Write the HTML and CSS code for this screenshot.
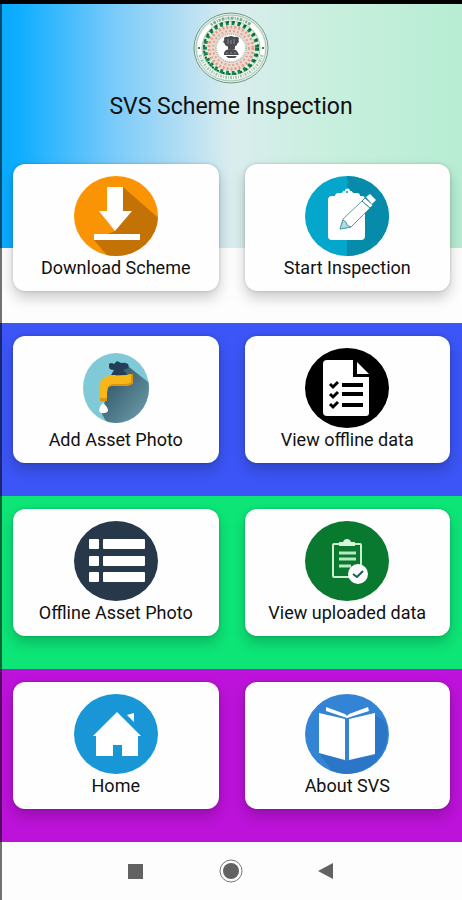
FILE: index.html
```html
<!DOCTYPE html>
<html lang="en">
<head>
    <meta charset="UTF-8">
    <meta name="viewport" content="width=device-width, initial-scale=1.0">
    <title>SVS Scheme Inspection</title>
    <link rel="stylesheet" href="styles.css">
</head>
<body>
    <div class="screen">
        <header class="header">
            <!-- state seal -->
            <svg class="seal" viewBox="0 0 76 72" aria-hidden="true">
                <ellipse cx="38" cy="36" rx="37" ry="35" fill="#e3efe6" stroke="#6f9a88" stroke-width="1"/>
                <ellipse cx="38" cy="36" rx="35" ry="33" fill="none" stroke="#a9c5b5" stroke-width="1"/>
                <!-- white sides of the outer ring -->
                <ellipse cx="38" cy="36" rx="31" ry="29" fill="none" stroke="#fff" stroke-width="5"/>
                <!-- lettering marks, top and bottom -->
                <path d="M18 13A31 29 0 0 1 58 13" fill="none" stroke="#7fae93" stroke-width="3" stroke-dasharray="2 1 3 1 1 1"/>
                <path d="M7 43A32 30 0 0 0 69 43" fill="none" stroke="#a3c6b2" stroke-width="3" stroke-dasharray="2 1 1 1"/>
                <circle cx="6" cy="36" r="1" fill="#333"/>
                <circle cx="70" cy="36" r="1" fill="#333"/>
                <ellipse cx="38" cy="36" rx="29" ry="27" fill="#dff0e2" stroke="#9ccbad" stroke-width="1"/>
                <ellipse cx="38" cy="36" rx="26" ry="25" fill="none" stroke="#18834a" stroke-width="4" stroke-dasharray="3 3"/>
                <ellipse cx="38" cy="36" rx="27" ry="26" fill="none" stroke="#105c35" stroke-width="2" stroke-dasharray="2 4"/>
                <ellipse cx="38" cy="36" rx="19" ry="18" fill="none" stroke="#eedbd0" stroke-width="9"/>
                <ellipse cx="38" cy="36" rx="22" ry="21" fill="none" stroke="#e79c8b" stroke-width="3" stroke-dasharray="2 2"/>
                <ellipse cx="38" cy="36" rx="18" ry="17" fill="none" stroke="#d9a797" stroke-width="2" stroke-dasharray="2 2"/>
                <ellipse cx="38" cy="36" rx="15" ry="14" fill="#fff" stroke="#b3b8ae" stroke-width="2" stroke-dasharray="1 1"/>
                <!-- lion capital -->
                <g fill="#4b4b4f">
                    <path d="M31 26q2-2 4-1q3-2 6 0q3-1 5 1q-1 2 0 4q-2 1-2 3q-2 2-6 2t-6-2q0-2-2-3q2-2 1-4z"/>
                    <path d="M35 34h7v3h-7zM31 41q1-4 7-4t7 4l1 2H31zM33 44h11l-2 2h-7z"/>
                </g>
                <path d="M35 27v5M38 28v4M41 27v5M33 41h2M37 41h2M41 41h2" stroke="#8f8f92" stroke-width="1"/>
            </svg>
            <h1 class="title">SVS Scheme Inspection</h1>
        </header>

        <main>
            <div class="row">
                <button class="card" type="button">
                    <svg class="icon" viewBox="0 0 84 80" aria-hidden="true">
                        <defs>
                            <clipPath id="disc"><ellipse cx="42" cy="40" rx="42" ry="40"/></clipPath>
                        </defs>
                        <ellipse cx="42" cy="40" rx="42" ry="40" fill="#fb9404"/>
                        <path clip-path="url(#disc)" fill="#c37206" d="M49 11L90 47V90H42L20 64L41 55L49 35z"/>
                        <path fill="#fff" d="M33 11h16v24h9L41 55L25 35h8zM20 58h46v6H20z"/>
                    </svg>
                    <span class="label">Download Scheme</span>
                </button>
                <button class="card" type="button">
                    <svg class="icon" viewBox="0 0 84 80" aria-hidden="true">
                        <ellipse cx="42" cy="40" rx="42" ry="40" fill="#05a6cb"/>
                        <path fill="#078bab" d="M42 0A42 40 0 0 1 42 80z"/>
                        <path fill="#fff" d="M27 20h3q0-3 4-3h2q2 0 2-2h2a2 2 0 0 1 5 0h2q0 2 3 2h2q3 0 3 3h2q3 0 3 3v37q0 4-4 4H27q-4 0-4-4V24q0-4 4-4z"/>
                        <circle cx="42" cy="16" r="1" fill="#078bab"/>
                        <path fill="#fff" stroke="#5c9eab" stroke-width="1" stroke-linejoin="round" d="M35 53L38 43L57 25L65 32L46 51z"/>
                        <path fill="#a9dce4" stroke="#5c9eab" stroke-width="1" d="M35 53L38 44L41 46L42 49L46 51z"/>
                        <path fill="#fff" stroke="#368d9f" stroke-width="1" d="M57 25L60 22L68 29L65 32z"/>
                        <path fill="#fff" d="M61 21L65 18L71 24L67 28z"/>
                    </svg>
                    <span class="label">Start Inspection</span>
                </button>
            </div>

            <div class="row row-blue">
                <button class="card" type="button">
                    <svg class="icon" viewBox="0 0 84 80" aria-hidden="true">
                        <defs>
                            <clipPath id="tapDisc"><ellipse cx="42" cy="40" rx="33" ry="35"/></clipPath>
                            <linearGradient id="tapShade" x1="0" y1="0" x2="1" y2="1">
                                <stop offset="0.200" stop-color="#365d6d"/>
                                <stop offset="0.800" stop-color="#6d9ca9"/>
                            </linearGradient>
                        </defs>
                        <ellipse cx="42" cy="40" rx="33" ry="35" fill="#80cad7"/>
                        <path clip-path="url(#tapDisc)" fill="url(#tapShade)" d="M50 15L84 42V84H38L28 66L34 40z"/>
                        <path fill="#243e5a" d="M35 16q2-2 5 0l3-3l4 2q4-1 7 1q2 4-2 5l-3 1l5 5H37l3-5q-5 0-5-3z"/>
                        <path fill="#f8b719" d="M26 53V37q0-8 9-9l17-1q3-1 6-1v10q-3 2-7 2H38q-5 0-5 4v11z"/>
                        <path fill="#dc940d" d="M26 53v-3h7v3zM57 26h2v10h-2zM33 42q0-5 6-6h12q4 0 7-2v2q-3 2-7 2H38q-5 0-5 4z"/>
                        <path fill="#fff" d="M29 55q5 4 5 8a5 4 0 0 1-9 0q0-4 4-8z"/>
                    </svg>
                    <span class="label">Add Asset Photo</span>
                </button>
                <button class="card" type="button">
                    <svg class="icon" viewBox="0 0 84 80" aria-hidden="true">
                        <ellipse cx="42" cy="40" rx="42" ry="40" fill="#000"/>
                        <path fill="#fff" d="M22 12h26v17h16v36q0 3-3 3H22q-4 0-4-4V16q0-4 4-4z"/>
                        <path fill="#fff" d="M52 14L64 26H52z"/>
                        <path stroke="#000" stroke-width="4" d="M37 37h21M37 46h21M37 57h21"/>
                        <path fill="none" stroke="#000" stroke-width="3" d="M25 36l3 3l5-5M25 46l3 3l5-5M25 56l3 3l5-5"/>
                    </svg>
                    <span class="label">View offline data</span>
                </button>
            </div>

            <div class="row row-green">
                <button class="card" type="button">
                    <svg class="icon" viewBox="0 0 84 80" aria-hidden="true">
                        <ellipse cx="42" cy="40" rx="42" ry="40" fill="#26384a"/>
                        <g fill="#fff">
                            <rect x="15" y="18" width="10" height="10" rx="1"/>
                            <rect x="29" y="18" width="42" height="10" rx="1"/>
                            <rect x="15" y="35" width="10" height="10" rx="1"/>
                            <rect x="29" y="35" width="42" height="10" rx="1"/>
                            <rect x="15" y="51" width="10" height="10" rx="1"/>
                            <rect x="29" y="51" width="42" height="10" rx="1"/>
                        </g>
                    </svg>
                    <span class="label">Offline Asset Photo</span>
                </button>
                <button class="card" type="button">
                    <svg class="icon" viewBox="0 0 84 80" aria-hidden="true">
                        <ellipse cx="42" cy="40" rx="42" ry="40" fill="#08792f"/>
                        <rect x="28" y="23" width="28" height="33" rx="1" fill="none" stroke="#c9f0cf" stroke-width="2"/>
                        <path fill="#d9f5dc" d="M34 21h4q1-3 4-3t4 3h4v4H34z"/>
                        <path stroke="#b9e8c1" stroke-width="3" d="M34 32h17M34 38h17M34 45h12"/>
                        <circle cx="53" cy="53" r="10" fill="#fff"/>
                        <path fill="none" stroke="#1e5b57" stroke-width="2" d="M48 53l4 3l6-6"/>
                    </svg>
                    <span class="label">View uploaded data</span>
                </button>
            </div>

            <div class="row row-purple">
                <button class="card" type="button">
                    <svg class="icon" viewBox="0 0 84 80" aria-hidden="true">
                        <ellipse cx="42" cy="40" rx="42" ry="40" fill="#1996d5"/>
                        <path fill="#fff" d="M43 18L67 42H64V62H48V51H39V62H22V42H19zM53 21L60 19V28z"/>
                    </svg>
                    <span class="label">Home</span>
                </button>
                <button class="card" type="button">
                    <svg class="icon" viewBox="0 0 84 80" aria-hidden="true">
                        <ellipse cx="42" cy="40" rx="42" ry="40" fill="#3484d6"/>
                        <path fill="#2c76c8" d="M14 59L41 67L70 61V21L80 27A42 40 0 0 1 42 80q-8 0-16-4z"/>
                        <path fill="#fff" d="M14 19L40 25V66L14 59zM44 25L70 19V60L44 66zM21 13L40 20L42 22L44 20L63 13L64 17L42 24L21 17z"/>
                    </svg>
                    <span class="label">About SVS</span>
                </button>
            </div>
        </main>

        <!-- system buttons -->
        <nav class="navbar">
            <button class="nav-button" type="button" aria-label="Recent apps">
                <svg class="nav-icon" viewBox="0 0 24 24"><rect x="5" y="5" width="15" height="15" fill="#626262"/></svg>
            </button>
            <button class="nav-button" type="button" aria-label="Home screen">
                <svg class="nav-icon" viewBox="0 0 24 24">
                    <circle cx="12" cy="12" r="11" fill="none" stroke="#777" stroke-width="1"/>
                    <circle cx="12" cy="12" r="8" fill="#626262"/>
                </svg>
            </button>
            <button class="nav-button" type="button" aria-label="Back">
                <svg class="nav-icon" viewBox="0 0 24 24"><path d="M18 4V20L3 12z" fill="#626262"/></svg>
            </button>
        </nav>
    </div>
</body>
</html>
```
FILE: styles.css
```css
* {
    box-sizing: border-box;
}
body {
    margin: 0;
    background-color: #fdfdfd;
    color: #111;
    font-family: Roboto, "Liberation Sans", sans-serif;
}
.screen {
    position: relative;
    min-height: 100vh;
    border-top: 4px solid #000;
    /* the gradient stops halfway down the first row of cards */
    background-image: linear-gradient(to right, #08abff 0%, #0eadff 4%, #7bcbfa 25%, #b5def3 40%, #daedee 50%, #c9efdf 70%, #b7edd3 100%);
    background-repeat: no-repeat;
    background-size: 100% 244px;
}
/* thin shade down the left edge */
.screen::after {
    content: "";
    position: absolute;
    top: 0;
    bottom: 0;
    left: 0;
    width: 2px;
    background-color: rgba(0, 0, 0, 0.55);
}
.header {
    display: flex;
    flex-direction: column;
    align-items: center;
    gap: 9px;
    padding: 8px 0 30px;
}
.seal {
    width: 76px;
    height: 72px;
}
.title {
    margin: 0;
    font-size: 23px;
    font-weight: 400;
    line-height: 28px;
}
.row {
    display: grid;
    grid-template-columns: 1fr 1fr;
    gap: 26px;
    padding: 13px 12px 33px 13px;
}
.row:first-child {
    padding-bottom: 32px;
}
.row-blue {
    background-color: #3b55f6;
}
.row-green {
    background-color: #0de577;
}
.row-purple {
    background-color: #bc12d9;
}
.card {
    display: flex;
    flex-direction: column;
    align-items: center;
    padding: 12px 0 11px;
    border: 0;
    border-radius: 12px;
    background-color: #fefefe;
    box-shadow: 0 7px 14px rgba(0, 0, 0, 0.2), 0 0 3px rgba(0, 0, 0, 0.2);
    color: inherit;
    font-family: inherit;
}
.icon {
    width: 84px;
    height: 80px;
}
.label {
    font-size: 18px;
    line-height: 24px;
}
.navbar {
    display: flex;
    justify-content: center;
    gap: 72px;
    padding: 17px 0;
}
.nav-button {
    padding: 0;
    border: 0;
    background: none;
}
.nav-icon {
    display: block;
    width: 24px;
    height: 24px;
}
```
